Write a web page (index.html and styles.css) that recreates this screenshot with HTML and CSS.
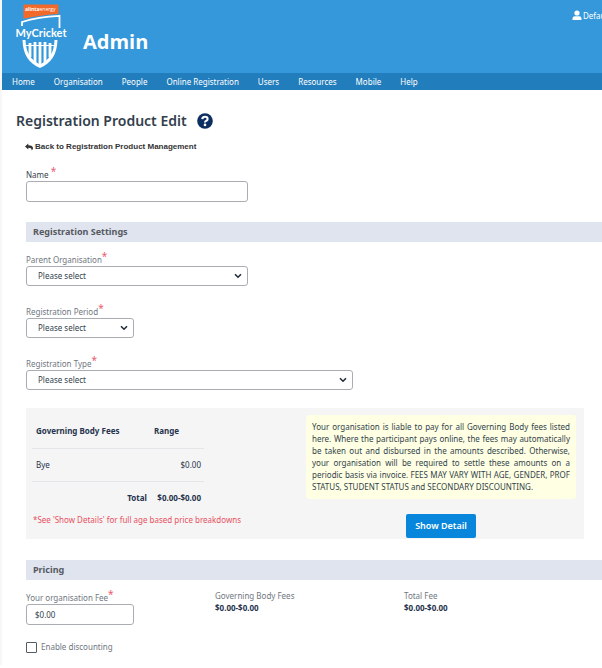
FILE: index.html
```html
<!DOCTYPE html>
<html lang="en">
<head>
    <meta charset="UTF-8">
    <meta name="viewport" content="width=device-width, initial-scale=1.0">
    <title>Registration Product Edit</title>
    <link rel="stylesheet" href="styles.css">
</head>
<body>
    <header class="header">
        <svg class="logo" viewBox="0 0 52 66" width="52" height="66" role="img" aria-label="MyCricket">
            <path d="M7.500 1.500Q7.500 0.500 8.500 0.500H41.500Q42.500 0.500 42.500 1.500V10Q22 11.500 7.500 14.800Z" fill="#f26a2a"/>
            <text x="9" y="7" class="logo-sponsor"><tspan class="logo-strong">alinta</tspan>energy</text>
            <path d="M6 22V18Q22 12.500 43.500 11.800V24" fill="none" stroke="#fff" stroke-width="1.800"/>
            <text x="25" y="33" class="logo-name" text-anchor="middle">MyCricket</text>
            <path d="M6.500 36H9.500C10 48 14 55.500 24 60.500C34 55.500 38 48 38.500 36H41.500C41 50.500 35.500 59 24 64C12.500 59 7 50.500 6.500 36Z" fill="#fff"/>
            <path d="M14 39V53M19 38V59M24 38V62M29 38V59M34 39V53" stroke="#fff" stroke-width="2.800"/>
            <path d="M9 41.500H39" stroke="#fff" stroke-width="1"/>
        </svg>
        <span class="site-title">Admin</span>
        <a class="account" href="#">
            <svg viewBox="0 0 10 11" width="10" height="11" aria-hidden="true">
                <circle cx="5" cy="3" r="2.600"/>
                <path d="M0.500 10V8.500Q0.500 6.200 3 6.200H7Q9.500 6.200 9.500 8.500V10Z"/>
            </svg>
            <span>Default</span>
        </a>
    </header>
    <nav class="nav">
        <a href="#">Home</a>
        <a href="#">Organisation</a>
        <a href="#">People</a>
        <a href="#">Online Registration</a>
        <a href="#">Users</a>
        <a href="#">Resources</a>
        <a href="#">Mobile</a>
        <a href="#">Help</a>
    </nav>

    <main class="main">
        <div class="title-row">
            <h1>Registration Product Edit</h1>
            <button type="button" class="help" aria-label="Help">
                <svg viewBox="0 0 16 16" width="16" height="16" aria-hidden="true">
                    <circle cx="8" cy="8" r="7.800" fill="#0b2e63"/>
                    <path d="M5.200 6.200Q5.600 3.800 8 3.800Q10.600 3.800 10.600 6Q10.600 7.200 9.200 7.900Q8 8.500 8 9.500" fill="none" stroke="#fff" stroke-width="2.100"/>
                    <circle cx="8" cy="11.900" r="1.300" fill="#fff"/>
                </svg>
            </button>
        </div>
        <a class="back-link" href="#">
            <svg viewBox="0 0 8 8" width="8" height="8" aria-hidden="true">
                <path d="M0 3.500L3.300 0.500V2.300C6.500 2.300 8 3.300 8 5.200Q8 6.600 6.500 7.600Q7.400 4.800 3.300 4.700V6.500Z"/>
            </svg>
            Back to Registration Product Management
        </a>

        <form class="form">
            <div class="field">
                <label class="dark" for="name">Name <span class="required">*</span></label>
                <input class="medium" type="text" id="name" required>
            </div>

            <h2>Registration Settings</h2>
            <div class="field">
                <label for="parent">Parent Organisation<span class="required">*</span></label>
                <select class="medium" id="parent"><option>Please select</option></select>
            </div>
            <div class="field">
                <label for="period">Registration Period<span class="required">*</span></label>
                <select class="small" id="period"><option>Please select</option></select>
            </div>
            <div class="field">
                <label for="type">Registration Type<span class="required">*</span></label>
                <select class="large" id="type"><option>Please select</option></select>
            </div>

            <div class="fees">
                <div class="fees-left">
                    <table>
                        <thead>
                            <tr><th class="fee-name">Governing Body Fees</th><th>Range</th></tr>
                        </thead>
                        <tbody>
                            <tr><td>Bye</td><td class="amount">$0.00</td></tr>
                        </tbody>
                        <tfoot>
                            <tr><th class="amount">Total</th><th class="amount">$0.00-$0.00</th></tr>
                        </tfoot>
                    </table>
                    <p class="note">*See 'Show Details' for full age based price breakdowns</p>
                </div>
                <div class="fees-right">
                    <p class="notice">Your organisation is liable to pay for all Governing Body fees listed here. Where the participant pays online, the fees may automatically be taken out and disbursed in the amounts described. Otherwise, your organisation will be required to settle these amounts on a periodic basis via invoice. FEES MAY VARY WITH AGE, GENDER, PROF STATUS, STUDENT STATUS and SECONDARY DISCOUNTING.</p>
                    <button type="button" class="detail-button">Show Detail</button>
                </div>
            </div>

            <h2>Pricing</h2>
            <div class="pricing">
                <div class="field">
                    <label for="fee">Your organisation Fee<span class="required">*</span></label>
                    <input class="small" type="text" id="fee" value="$0.00">
                </div>
                <div class="price">
                    <span>Governing Body Fees</span>
                    <strong>$0.00-$0.00</strong>
                </div>
                <div class="price">
                    <span>Total Fee</span>
                    <strong>$0.00-$0.00</strong>
                </div>
            </div>
            <div class="check">
                <input type="checkbox" id="discount">
                <label for="discount">Enable discounting</label>
            </div>
        </form>
    </main>
</body>
</html>
```

FILE: styles.css
```css
* {
    box-sizing: border-box;
}
body {
    margin: 0;
    border-left: 2px solid #f7f7f8;
    font-family: "Noto Sans", "Open Sans", sans-serif;
    font-size: 8px;
    line-height: 12px;
    color: #333f4d;
    background-color: #fff;
    overflow-x: hidden;
}
a {
    color: inherit;
    text-decoration: none;
}
.header {
    display: flex;
    align-items: center;
    height: 73px;
    padding: 0 0 0 14px;
    background-color: #3598db;
    color: #fff;
    overflow: hidden;
}
.logo {
    flex: none;
}
.logo text {
    fill: #fff;
}
.logo .logo-sponsor {
    font-family: "Open Sans", sans-serif;
    font-size: 5px;
}
.logo-strong {
    font-weight: 700;
}
.logo .logo-name {
    font-family: Lato, sans-serif;
    font-size: 11px;
    font-weight: 700;
}
.site-title {
    margin: 10px auto 0 15px;
    font-family: "Open Sans", sans-serif;
    font-size: 20px;
    font-weight: 700;
    line-height: 28px;
}
.account {
    display: flex;
    align-self: flex-start;
    gap: 1px;
    width: 30px;
    margin-top: 10px;
    white-space: nowrap;
}
.account svg {
    flex: none;
    fill: #fff;
}
.nav {
    display: flex;
    gap: 19px;
    padding: 0 10px;
    background-color: #217dbb;
    color: #fff;
    line-height: 17px;
    white-space: nowrap;
}
.main {
    padding: 21px 0 12px 14px;
}
.title-row {
    display: flex;
    align-items: center;
    gap: 10px;
}
h1 {
    margin: 0;
    font-size: 14px;
    line-height: 20px;
    font-weight: 600;
}
.help {
    display: flex;
    padding: 0;
    border: 0;
    background: none;
    cursor: pointer;
}
.back-link {
    display: flex;
    align-items: center;
    gap: 2px;
    margin: 10px 0 0 9px;
    font-family: "Liberation Sans", Arial, sans-serif;
    font-weight: 700;
    color: #333;
}
.back-link svg {
    fill: #333;
}
.form {
    margin: 14px 0 0 10px;
}
.field {
    display: flex;
    flex-direction: column;
    align-items: flex-start;
    margin-bottom: 18px;
}
label {
    color: #707780;
}
.field label {
    padding-top: 2px;
}
.field .dark {
    color: #333f4d;
}
.required {
    color: #ec5a70;
    font-size: 10px;
    line-height: 4px;
    vertical-align: top;
}
input[type="text"],
select {
    height: 21px;
    padding: 0 8px;
    border: 1px solid #a9adb3;
    border-radius: 3px;
    background-color: #fff;
    color: #333f4d;
    font: inherit;
}
select {
    height: 20px;
    padding: 0 11px;
    appearance: none;
    background-image: url("data:image/svg+xml,%3Csvg xmlns='http://www.w3.org/2000/svg' viewBox='0 0 8 6'%3E%3Cpath d='M1 1.200L4 4.200L7 1.200' fill='none' stroke='%23222c38' stroke-width='1.600'/%3E%3C/svg%3E");
    background-repeat: no-repeat;
    background-position: right 5px center;
    background-size: 8px 6px;
}
.small {
    width: 108px;
}
.medium {
    width: 222px;
}
.large {
    width: 327px;
}
h2 {
    margin: 20px 0 10px;
    padding: 0 7px;
    background-color: #dfe4ee;
    color: #56595f;
    font-size: 9px;
    font-weight: 700;
    line-height: 20px;
}
.fees {
    display: flex;
    justify-content: space-between;
    margin: 0 18px 21px 0;
    padding: 7px 8px 1px 6px;
    background-color: #f5f5f5;
}
.fees table {
    width: 172px;
    border-collapse: collapse;
    color: #26334d;
}
.fees th,
.fees td {
    height: 33px;
    padding: 0 3px 0 4px;
    text-align: left;
}
.fees th {
    font-weight: 700;
}
.fees .fee-name {
    width: 118px;
}
.fees tbody tr {
    border-top: 1px solid #e3e5e8;
    border-bottom: 1px solid #e3e5e8;
}
.fees .amount {
    text-align: right;
}
.note {
    margin: 0 0 0 1px;
    color: #e8505f;
    white-space: nowrap;
}
.fees-right {
    display: flex;
    flex-direction: column;
    align-items: center;
    width: 270px;
}
.notice {
    margin: 0 0 15px;
    padding: 6px;
    border-radius: 3px;
    background-color: #feffe3;
    text-align: justify;
}
.detail-button {
    width: 70px;
    height: 24px;
    padding: 0;
    border: 0;
    border-radius: 2px;
    background-color: #0786dc;
    color: #fff;
    font: inherit;
    font-size: 9px;
    font-weight: 600;
    cursor: pointer;
}
.pricing {
    display: grid;
    grid-template-columns: 1fr 1fr 1fr;
    margin-right: 9px;
}
.pricing .field {
    margin-bottom: 16px;
}
.price {
    display: flex;
    flex-direction: column;
    color: #707780;
}
.price strong {
    color: #26334d;
}
.check {
    display: flex;
    align-items: center;
    gap: 4px;
}
.check input {
    appearance: none;
    width: 11px;
    height: 11px;
    margin: 0;
    border: 1px solid #555b63;
    border-radius: 1px;
    background-color: #fff;
}
.check input:checked {
    background-color: #0786dc;
}
```
